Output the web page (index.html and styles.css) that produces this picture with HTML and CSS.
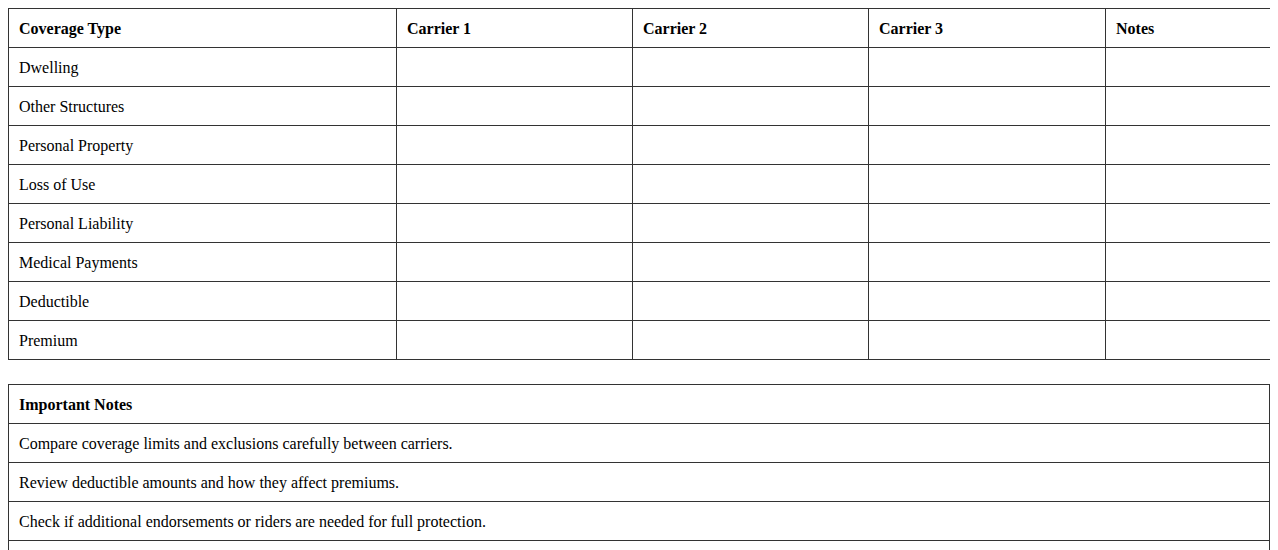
FILE: index.html
```html
<!DOCTYPE html>
<html>
<head>
<meta charset="utf-8">
<link rel="stylesheet" href="styles.css">
</head>
<body>
<table class="grid">
  <colgroup>
    <col class="c-type">
    <col class="c-car">
    <col class="c-car">
    <col class="c-car3">
    <col class="c-notes">
  </colgroup>
  <thead>
    <tr><th>Coverage Type</th><th>Carrier 1</th><th>Carrier 2</th><th>Carrier 3</th><th>Notes</th></tr>
  </thead>
  <tbody>
    <tr><td>Dwelling</td><td></td><td></td><td></td><td></td></tr>
    <tr><td>Other Structures</td><td></td><td></td><td></td><td></td></tr>
    <tr><td>Personal Property</td><td></td><td></td><td></td><td></td></tr>
    <tr><td>Loss of Use</td><td></td><td></td><td></td><td></td></tr>
    <tr><td>Personal Liability</td><td></td><td></td><td></td><td></td></tr>
    <tr><td>Medical Payments</td><td></td><td></td><td></td><td></td></tr>
    <tr><td>Deductible</td><td></td><td></td><td></td><td></td></tr>
    <tr><td>Premium</td><td></td><td></td><td></td><td></td></tr>
  </tbody>
</table>
<table class="grid notes">
  <thead>
    <tr><th>Important Notes</th></tr>
  </thead>
  <tbody>
    <tr><td>Compare coverage limits and exclusions carefully between carriers.</td></tr>
    <tr><td>Review deductible amounts and how they affect premiums.</td></tr>
    <tr><td>Check if additional endorsements or riders are needed for full protection.</td></tr>
    <tr><td>Consider the financial strength and claims reputation of each carrier.</td></tr>
  </tbody>
</table>
</body>
</html>
```
FILE: styles.css
```css
body {
  margin: 8px;
  font-family: "Liberation Serif", "Times New Roman", serif;
  font-size: 16px;
  color: #000;
  background: #fff;
}
.grid {
  width: 100%;
  border-collapse: collapse;
  table-layout: fixed;
  margin-bottom: 24px;
}
.grid th,
.grid td {
  border: 1px solid #333;
  padding: 11px 10px 9px;
  height: 18px;
  text-align: left;
  vertical-align: middle;
  line-height: 18px;
}
.grid th {
  font-weight: bold;
}
.c-type { width: 388px; }
.c-car { width: 236px; }
.c-car3 { width: 237px; }
.c-notes { width: 165px; }
```
